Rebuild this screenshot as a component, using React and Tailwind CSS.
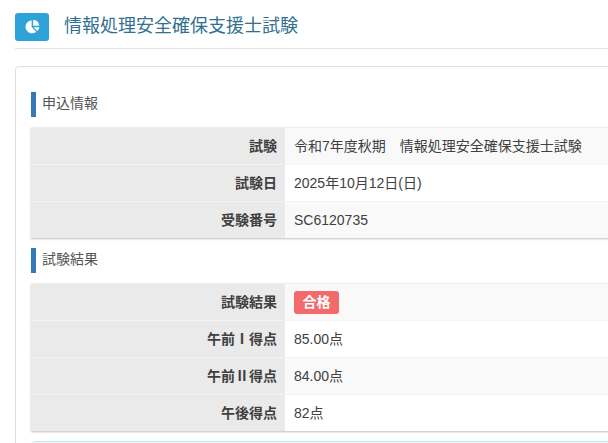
function Heading({ children, className }) {
  return (
    <div className={`flex items-center h-[25px] border-l-[5px] border-[#337ab7] pl-[6px] pb-[2px] text-[14px] text-[#555] ${className}`}>
      {children}
    </div>
  );
}

function Table({ rows }) {
  return (
    <div className="shadow-[0_1px_2px_rgba(0,0,0,0.25)] text-[14px] text-[#404040]">
      {rows.map(([label, value], i) => (
        <div key={i} className={`flex h-[37px] border-t ${i > 0 ? "border-[#f4f4f4]" : "border-[#f0f0f0]"}`}>
          <div className="w-[254px] shrink-0 bg-[#eaeaea] flex items-center justify-end pr-[8px] font-bold text-[#404040]">
            {label}
          </div>
          <div className={`flex-1 flex items-center pl-[9px] ${i % 2 === 0 ? "bg-[#f9f9f9]" : "bg-white"}`}>
            {value}
          </div>
        </div>
      ))}
    </div>
  );
}

export default function App() {
  return (
    <div className="w-[608px] h-[443px] overflow-hidden bg-white font-['Liberation_Sans','Noto_Sans_CJK_JP',sans-serif]">
      <div className="w-[720px] pl-[15px]">
        <div className="flex items-center h-[49px] border-b border-[#e5e5e5] pt-[5px]">
          <div className="w-[34px] h-[28px] rounded-[3px] bg-[#2ea3d9] flex items-center justify-center">
            <svg width="15" height="15" viewBox="0 0 14 14" fill="#fff">
              <path d="M6.2 1.2v6.3l4.4 4.4A6.1 6.1 0 1 1 6.2 1.2z" />
              <path d="M7.6 .6a6.2 6.2 0 0 1 5.8 5.8H7.6z" />
              <path d="M8 7.6h5.4a6.2 6.2 0 0 1-1.8 3.6z" />
            </svg>
          </div>
          <h1 className="ml-[15px] -mt-[1px] text-[18px] font-normal text-[#31708f]">情報処理安全確保支援士試験</h1>
        </div>
        <div className="mt-[17px] border border-[#dddddd] rounded-[4px] pt-[25px] pl-[15px] pb-[20px]">
          <Heading className="">申込情報</Heading>
          <div className="mt-[10px]">
            <Table
              rows={[
                ["試験", "令和7年度秋期　情報処理安全確保支援士試験"],
                ["試験日", "2025年10月12日(日)"],
                ["受験番号", "SC6120735"],
              ]}
            />
          </div>
          <Heading className="mt-[10px]">試験結果</Heading>
          <div className="mt-[10px]">
            <Table
              rows={[
                [
                  "試験結果",
                  <span className="inline-flex items-center justify-center w-[45px] h-[23px] rounded-[3px] bg-[#f26a6a] text-white font-bold text-[14px]">合格</span>,
                ],
                ["午前Ⅰ得点", "85.00点"],
                ["午前Ⅱ得点", "84.00点"],
                ["午後得点", "82点"],
              ]}
            />
          </div>
          <div className="mt-[10px] h-[20px] border border-[#bce8f1] rounded-[4px] bg-[#f4fbfd]" />
        </div>
      </div>
    </div>
  );
}
